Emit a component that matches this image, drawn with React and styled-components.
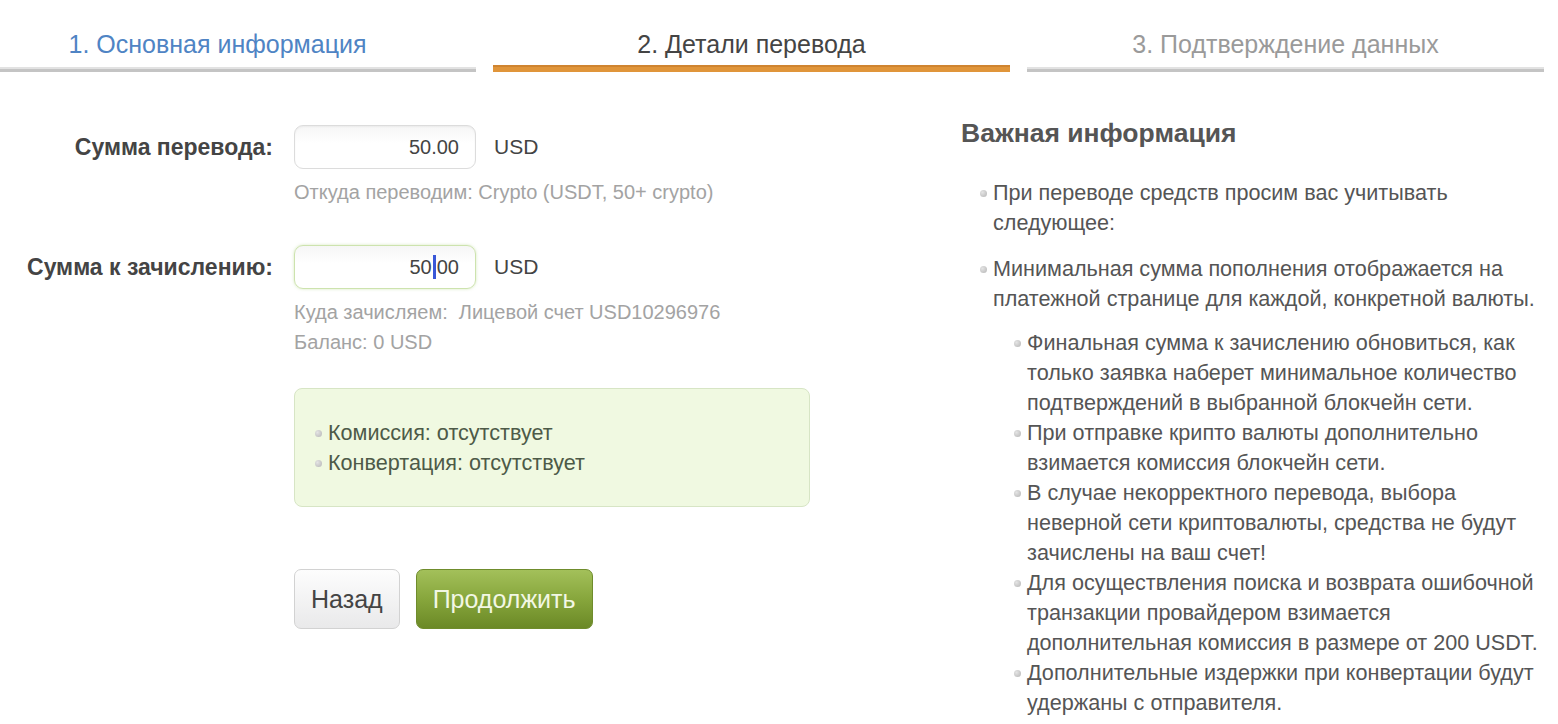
import React from "react";
import styled, { createGlobalStyle } from "styled-components";

const GlobalStyle = createGlobalStyle`
  html, body {
    margin: 0;
    padding: 0;
    background: #fff;
    font-family: "Liberation Sans", Arial, sans-serif;
    overflow: hidden;
  }
`;

const Page = styled.div`
  width: 1558px;
  height: 724px;
  overflow: hidden;
`;

const Tabs = styled.div`
  display: flex;
  gap: 17px;
  margin-left: -41px;
`;

const Tab = styled.div`
  box-sizing: border-box;
  width: 517px;
  height: 72px;
  padding-top: 30px;
  text-align: center;
  font-size: 25px;
  line-height: 28px;
  color: ${(p) => (p.$state === "done" ? "#4f84c4" : p.$state === "active" ? "#444" : "#9a9a9a")};
  border-bottom: ${(p) => (p.$state === "active" ? "5px solid #e0953a" : "3px solid #c4c4c4")};
  box-shadow: ${(p) => (p.$state === "active" ? "inset 0 -2px 0 #cf8430" : "inset 0 -2px 0 #e2e2e2")};
`;

const Main = styled.div`
  display: flex;
`;

const Left = styled.div`
  width: 961px;
  padding-top: 53px;
`;

const Field = styled.div`
  display: grid;
  grid-template-columns: 273px 1fr;
  column-gap: 21px;
  margin-bottom: ${(p) => p.$gap || 0}px;
`;

const Label = styled.div`
  text-align: right;
  font-size: 23px;
  font-weight: bold;
  color: #444;
  line-height: 44px;
`;

const InputRow = styled.div`
  display: flex;
  align-items: center;
  gap: 18px;
`;

const Input = styled.div`
  box-sizing: border-box;
  width: 182px;
  height: 44px;
  border-radius: 9px;
  border: 1px solid ${(p) => (p.$focus ? "#cde3ae" : "#dcdcdc")};
  background: linear-gradient(#f6f6f6, #fff 40%);
  box-shadow: ${(p) => (p.$focus ? "0 0 3px rgba(170, 210, 120, 0.5)" : "inset 0 1px 2px rgba(0,0,0,0.05)")};
  display: flex;
  align-items: center;
  justify-content: flex-end;
  padding-right: 16px;
  font-size: 20px;
  color: #444;
`;

const Caret = styled.span`
  display: inline-block;
  width: 3px;
  height: 24px;
  margin: 0 1px;
  background: #3a57d8;
  vertical-align: middle;
`;

const Currency = styled.span`
  font-size: 21px;
  color: #444;
`;

const Hint = styled.div`
  grid-column: 2;
  margin-top: 8px;
  font-size: 20px;
  line-height: 30px;
  color: #a3a3a3;
  white-space: pre;
`;

const InfoBox = styled.div`
  margin: 31px 0 0 294px;
  box-sizing: border-box;
  width: 516px;
  height: 119px;
  padding: 29px 20px 0;
  border: 1px solid #d7e5c5;
  border-radius: 8px;
  background: #f0f9e1;
`;

const List = styled.ul`
  list-style: none;
  margin: 0;
  padding: 0;
`;

const Item = styled.li`
  position: relative;
  padding-left: ${(p) => p.$indent || 13}px;
  font-size: 21.6px;
  line-height: 30px;
  color: ${(p) => p.$color || "#555"};
  margin-bottom: ${(p) => p.$gap || 0}px;

  &::before {
    content: "";
    position: absolute;
    left: ${(p) => (p.$indent || 13) - 13}px;
    top: 12px;
    width: 7px;
    height: 7px;
    border-radius: 50%;
    background: radial-gradient(circle at 35% 35%, #e4e4e4, #b5b5b5);
  }
`;

const Buttons = styled.div`
  display: flex;
  gap: 16px;
  margin: 62px 0 0 294px;
`;

const Button = styled.button`
  box-sizing: border-box;
  height: 60px;
  padding: 0 16px;
  border-radius: 7px;
  font-family: "Liberation Sans", Arial, sans-serif;
  font-size: 25px;
  border: 1px solid ${(p) => (p.$primary ? "#6f8c2c" : "#d2d2d2")};
  color: ${(p) => (p.$primary ? "#f2f7e4" : "#444")};
  background: ${(p) =>
    p.$primary
      ? "linear-gradient(#a3c05a, #87a63c 50%, #6b8926)"
      : "linear-gradient(#fdfdfd, #e9e9ea)"};
`;

const Right = styled.div`
  width: 581px;
  padding-top: 46px;
`;

const Heading = styled.h2`
  margin: 0 0 30px;
  font-size: 26.5px;
  line-height: 30px;
  font-weight: bold;
  color: #555;
`;

export default function App() {
  return (
    <Page>
      <GlobalStyle />
      <Tabs>
        <Tab $state="done">1. Основная информация</Tab>
        <Tab $state="active">2. Детали перевода</Tab>
        <Tab $state="todo">3. Подтверждение данных</Tab>
      </Tabs>
      <Main>
        <Left>
          <Field $gap={38}>
            <Label>Сумма перевода:</Label>
            <InputRow>
              <Input>50.00</Input>
              <Currency>USD</Currency>
            </InputRow>
            <Hint>Откуда переводим: Crypto (USDT, 50+ crypto)</Hint>
          </Field>
          <Field>
            <Label>Сумма к зачислению:</Label>
            <InputRow>
              <Input $focus>
                50<Caret />00
              </Input>
              <Currency>USD</Currency>
            </InputRow>
            <Hint>
              {"Куда зачисляем:  Лицевой счет USD10296976"}
              <br />
              Баланс: 0 USD
            </Hint>
          </Field>
          <InfoBox>
            <List>
              <Item $color="#4d5a48">Комиссия: отсутствует</Item>
              <Item $color="#4d5a48">Конвертация: отсутствует</Item>
            </List>
          </InfoBox>
          <Buttons>
            <Button>Назад</Button>
            <Button $primary>Продолжить</Button>
          </Buttons>
        </Left>
        <Right>
          <Heading>Важная информация</Heading>
          <List>
            <Item $indent={32} $gap={16}>
              При переводе средств просим вас учитывать следующее:
            </Item>
            <Item $indent={32} $gap={14}>
              Минимальная сумма пополнения отображается на платежной странице для каждой, конкретной валюты.
            </Item>
            <Item $indent={66}>
              Финальная сумма к зачислению обновиться, как только заявка наберет минимальное количество
              подтверждений в выбранной блокчейн сети.
            </Item>
            <Item $indent={66}>При отправке крипто валюты дополнительно взимается комиссия блокчейн сети.</Item>
            <Item $indent={66}>
              В случае некорректного перевода, выбора неверной сети криптовалюты, средства не будут зачислены на ваш
              счет!
            </Item>
            <Item $indent={66}>
              Для осуществления поиска и возврата ошибочной транзакции провайдером взимается дополнительная комиссия в
              размере от 200 USDT.
            </Item>
            <Item $indent={66}>Дополнительные издержки при конвертации будут удержаны с отправителя.</Item>
          </List>
        </Right>
      </Main>
    </Page>
  );
}
